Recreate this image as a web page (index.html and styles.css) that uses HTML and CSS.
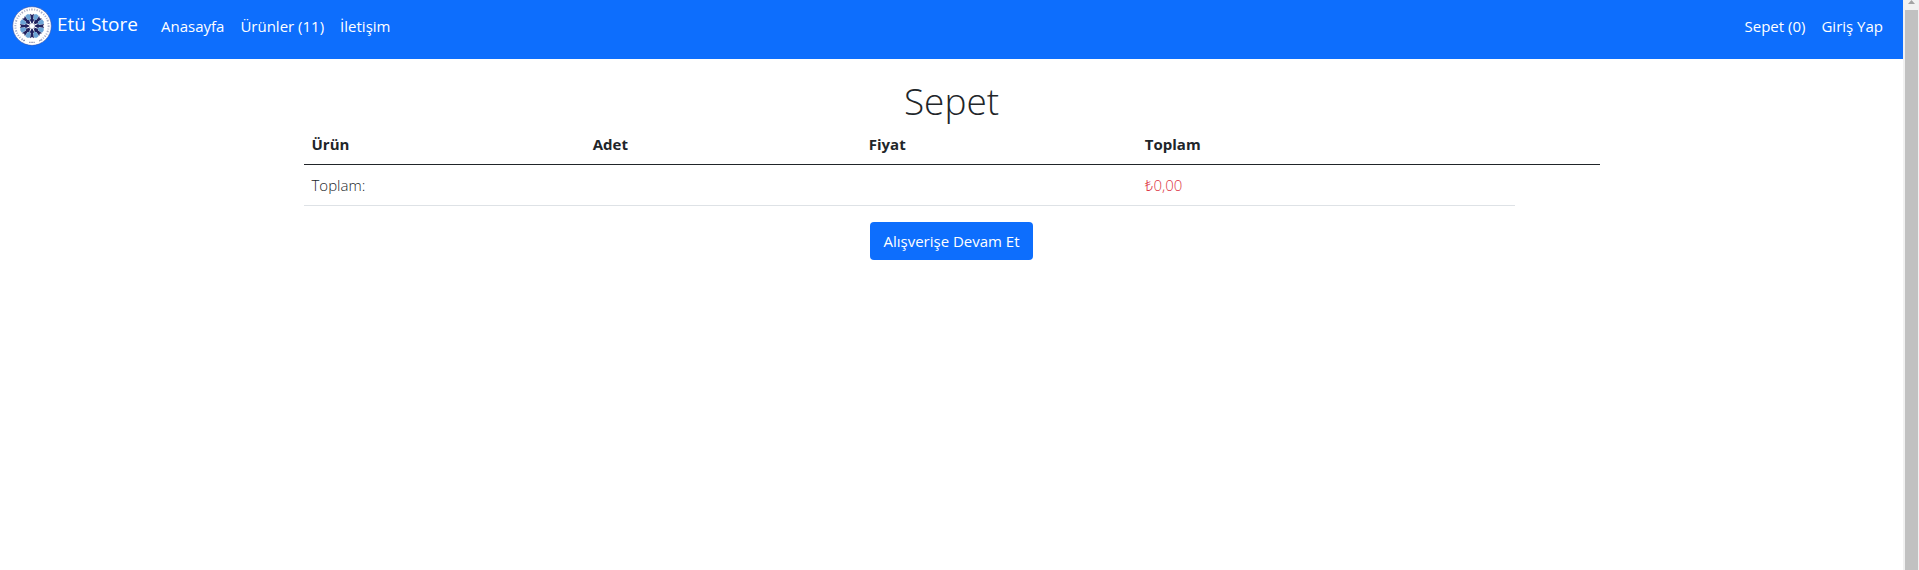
FILE: index.html
```html
<!DOCTYPE html>
<html lang="tr">
<head>
<meta charset="utf-8">
<meta name="viewport" content="width=device-width, initial-scale=1">
<title>Sepet - Etü Store</title>
<link rel="stylesheet" href="styles.css">
</head>
<body>
<div class="page">
  <header class="navbar">
    <a class="brand" href="#">
      <svg class="brand-logo" viewBox="0 0 40 40" aria-hidden="true">
        <defs>
          <path id="petal" d="M20 18.2 L17.9 14 L18.9 12.4 L18 7.8 L20 9 L22 7.8 L21.1 12.4 L22.1 14 Z"/>
          <path id="block" d="M20 14.6 L18 11.6 L17.6 8.2 L20 7.4 L22.4 8.2 L22 11.6 Z"/>
        </defs>
        <circle cx="20" cy="20" r="19.3" fill="#fff" stroke="#3c56a8" stroke-width=".6"/>
        <circle cx="20" cy="20" r="16.6" fill="none" stroke="#a9adc6" stroke-width="2" stroke-dasharray="1.2 1.5 .8 1.3 1.5 1.6 1 1.4"/>
        <path d="M13 33.2 Q20 37 27 33.2 L27.5 37 Q20 40 12.5 37 Z" fill="#fff"/>
        <path d="M17.2 36.4h5.6" stroke="#8a90b0" stroke-width="1.2" stroke-dasharray="1 .5"/>
        <circle cx="12" cy="34.4" r=".6" fill="#59608c"/>
        <circle cx="28" cy="34.4" r=".6" fill="#59608c"/>
        <g fill="#6ba4d6">
          <use href="#block" transform="rotate(22.5 20 20)"/>
          <use href="#block" transform="rotate(67.5 20 20)"/>
          <use href="#block" transform="rotate(112.5 20 20)"/>
          <use href="#block" transform="rotate(157.5 20 20)"/>
          <use href="#block" transform="rotate(202.5 20 20)"/>
          <use href="#block" transform="rotate(247.5 20 20)"/>
          <use href="#block" transform="rotate(292.5 20 20)"/>
          <use href="#block" transform="rotate(337.5 20 20)"/>
        </g>
        <g fill="#20225f">
          <use href="#petal"/>
          <use href="#petal" transform="rotate(45 20 20)"/>
          <use href="#petal" transform="rotate(90 20 20)"/>
          <use href="#petal" transform="rotate(135 20 20)"/>
          <use href="#petal" transform="rotate(180 20 20)"/>
          <use href="#petal" transform="rotate(225 20 20)"/>
          <use href="#petal" transform="rotate(270 20 20)"/>
          <use href="#petal" transform="rotate(315 20 20)"/>
        </g>
        <path d="M20 17v6M17 20h6M17.6 17.6l4.8 4.8M22.4 17.6l-4.8 4.8" stroke="#fff" stroke-width=".8"/>
      </svg>
      <span>Etü Store</span>
    </a>
    <nav class="nav nav-main">
      <a href="#">Anasayfa</a>
      <a href="#">Ürünler (11)</a>
      <a href="#">İletişim</a>
    </nav>
    <nav class="nav">
      <a href="#">Sepet (0)</a>
      <a href="#">Giriş Yap</a>
    </nav>
  </header>
  <main class="container">
    <h1 class="title">Sepet</h1>
    <table class="cart">
      <colgroup>
        <col class="col-product"><col class="col-mid"><col class="col-mid"><col class="col-total"><col class="col-end">
      </colgroup>
      <thead>
        <tr><th scope="col">Ürün</th><th scope="col">Adet</th><th scope="col">Fiyat</th><th scope="col" colspan="2">Toplam</th></tr>
      </thead>
      <tbody>
        <tr><td colspan="3">Toplam:</td><td class="amount">₺0,00</td></tr>
      </tbody>
    </table>
    <a class="button" href="#">Alışverişe Devam Et</a>
  </main>
</div>
<div class="scrollbar" aria-hidden="true">
  <div class="scroll-arrow"></div>
  <div class="scroll-thumb"></div>
</div>
</body>
</html>
```
FILE: styles.css
```css
* {
  box-sizing: border-box;
}

body {
  display: flex;
  min-height: 100vh;
  margin: 0;
  background: #fff;
  color: #212529;
  font: 15px/24px "Open Sans", "Noto Sans", sans-serif;
}

a {
  color: inherit;
  text-decoration: none;
}

.page {
  flex: 1;
}

.navbar {
  display: flex;
  align-items: flex-start;
  padding: 6px 12px 13px;
  background: #0d6efd;
  color: #fff;
}

.brand {
  display: flex;
  margin-right: 15px;
  font-size: 19px;
  line-height: 36px;
}

.brand-logo {
  width: 40px;
  height: 40px;
  margin-right: 5px;
}

.nav {
  display: flex;
}

.nav a {
  padding: 8px;
}

.nav-main {
  flex: 1;
}

.container {
  display: flex;
  flex-direction: column;
  align-items: center;
  max-width: 1320px;
  margin: 0 auto;
  padding: 17px 12px;
}

.title {
  margin: 0;
  padding-top: 1px;
  font-size: 37px;
  font-weight: 300;
  line-height: 47px;
}

.cart {
  width: 100%;
  margin-bottom: 16px;
  table-layout: fixed;
  border-spacing: 0;
  text-align: left;
}

.cart th,
.cart td {
  padding: 8px;
  border-bottom: 1px solid #dee2e6;
}

.cart th {
  border-color: #212529;
  font-weight: 700;
}

.cart td {
  font-weight: 350;
}

.cart .amount {
  color: #dc3545;
}

.col-product {
  width: 21.7%;
}

.col-mid {
  width: 21.3%;
}

.col-total {
  width: 29.2%;
}

.button {
  padding: 7px 13px;
  border-radius: 4px;
  background: #0d6efd;
  color: #fff;
}

.scrollbar {
  display: flex;
  flex-direction: column;
  width: 16px;
  padding: 0 1px 0 2px;
  background: #f1f1f1;
}

.scroll-arrow {
  height: 10px;
  padding-left: 3px;
}

.scroll-arrow::before {
  content: "";
  display: block;
  width: 7px;
  height: 4px;
  background: #a3a3a3;
  clip-path: polygon(50% 0, 100% 100%, 0 100%);
}

.scroll-thumb {
  flex: 1;
  background: #c1c1c1;
}
```
